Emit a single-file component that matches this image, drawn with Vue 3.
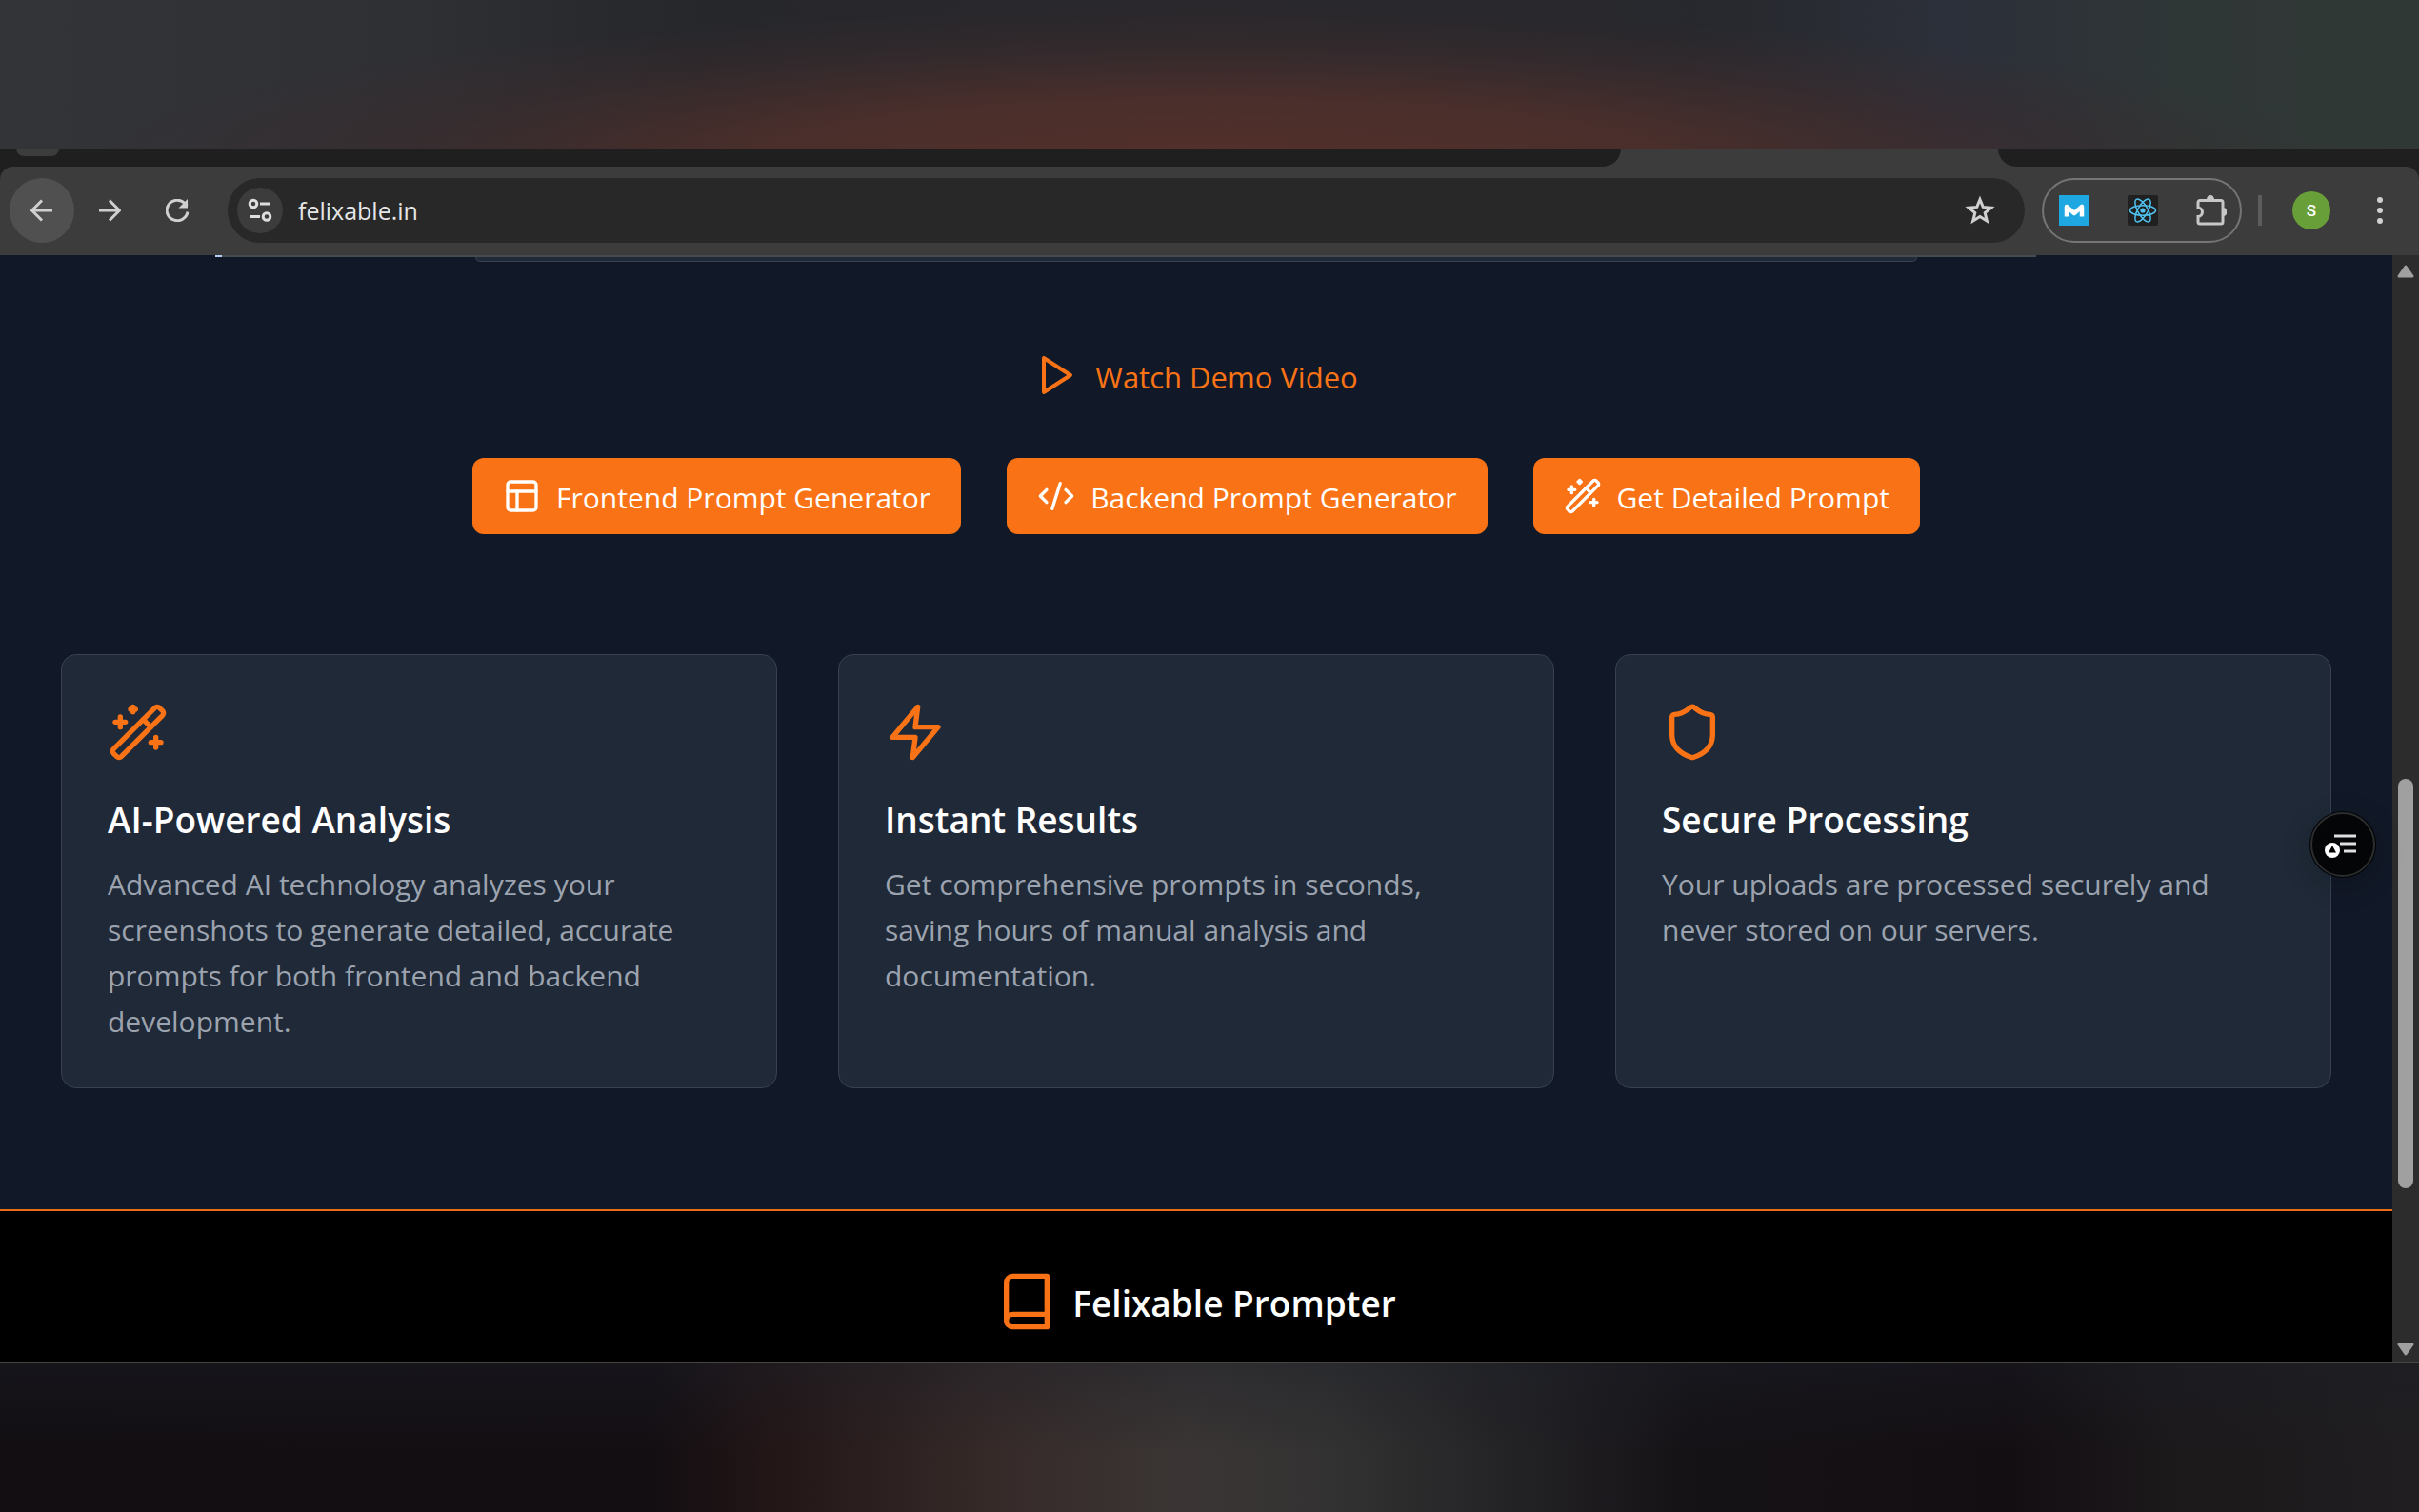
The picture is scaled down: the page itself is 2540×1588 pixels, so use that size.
<script setup>
    import { ref } from 'vue';

    const address = ref('felixable.in');

    const tools = [
        { icon: 'layout', label: 'Frontend Prompt Generator' },
        { icon: 'code', label: 'Backend Prompt Generator' },
        { icon: 'wand', label: 'Get Detailed Prompt' }
    ];

    const features = [
        {
            icon: 'wand',
            title: 'AI-Powered Analysis',
            text: 'Advanced AI technology analyzes your screenshots to generate detailed, accurate prompts for both frontend and backend development.'
        },
        {
            icon: 'zap',
            title: 'Instant Results',
            text: 'Get comprehensive prompts in seconds, saving hours of manual analysis and documentation.'
        },
        {
            icon: 'shield',
            title: 'Secure Processing',
            text: 'Your uploads are processed securely and never stored on our servers.'
        }
    ];

    // 24x24 stroke icons
    const icons = {
        layout: ['M5 3h14a2 2 0 0 1 2 2v14a2 2 0 0 1-2 2H5a2 2 0 0 1-2-2V5a2 2 0 0 1 2-2z', 'M3 9h18', 'M9 21V9'],
        code: ['m18 16 4-4-4-4', 'm6 8-4 4 4 4', 'm14.5 4-5 16'],
        wand: [
            'm21.64 3.64-1.28-1.28a1.21 1.21 0 0 0-1.72 0L2.36 18.64a1.21 1.21 0 0 0 0 1.72l1.28 1.28a1.2 1.2 0 0 0 1.72 0L21.64 5.36a1.2 1.2 0 0 0 0-1.72',
            'm14 7 3 3', 'M5 6v4', 'M19 14v4', 'M10 2v2', 'M7 8H3', 'M21 16h-4', 'M11 3H9'
        ],
        zap: ['M13 2 3 14h9l-1 8 10-12h-9l1-8z'],
        shield: ['M20 13c0 5-3.5 7.5-7.66 8.95a1 1 0 0 1-.67-.01C7.5 20.5 4 18 4 13V6a1 1 0 0 1 1-1c2 0 4.5-1.2 6.24-2.72a1.17 1.17 0 0 1 1.52 0C14.51 3.81 17 5 19 5a1 1 0 0 1 1 1z']
    };
</script>

<template>
    <div class="screen">
        <div class="backdrop backdrop--top"></div>

        <div class="browser">
            <div class="tabs">
                <div class="tabs__left"><div class="tabs__search"></div></div>
                <div class="tabs__active"></div>
                <div class="tabs__right"></div>
            </div>

            <div class="toolbar">
                <button class="toolbar__nav toolbar__nav--active" aria-label="Back">
                    <svg viewBox="0 0 24 24"><path d="M23 12H2M12 1.500 1.500 12 12 22.500" /></svg>
                </button>
                <button class="toolbar__nav" aria-label="Forward">
                    <svg viewBox="0 0 24 24"><path d="M1 12h21M12 1.500 22.500 12 12 22.500" /></svg>
                </button>
                <button class="toolbar__nav" aria-label="Reload">
                    <svg viewBox="0 0 24 24"><path d="M23 13.500A11 10.700 0 1 1 20 4.500L22.500 7" /><path d="M23 0v9.500h-9.500z" fill="currentColor" stroke="none" /></svg>
                </button>

                <div class="address">
                    <button class="address__site" aria-label="Site information">
                        <svg viewBox="0 0 26 26">
                            <circle cx="6" cy="6" r="3.800" /><path d="M13 6h11M2 19.500h11" /><circle cx="20" cy="19.500" r="3.800" />
                        </svg>
                    </button>
                    <input v-model="address" class="address__input" type="text" aria-label="Address">
                    <button class="address__star" aria-label="Bookmark">
                        <svg viewBox="0 0 32 32"><path d="m16 4.500 3.200 7.900 8.600.7-6.600 5.500 2.100 8.500L16 22.500l-7.300 4.600 2.100-8.500-6.600-5.500 8.600-.7z" /></svg>
                    </button>
                </div>

                <div class="extensions">
                    <button aria-label="M extension">
                        <svg viewBox="0 0 32 32">
                            <rect width="32" height="32" fill="#1ea7e1" />
                            <path d="M8 22.500V12l8 7 8-7v10.500" fill="none" stroke="#fff" stroke-width="4.500" stroke-linejoin="round" />
                        </svg>
                    </button>
                    <button aria-label="React developer tools">
                        <svg viewBox="0 0 32 32">
                            <rect width="32" height="32" rx="2" fill="#202020" />
                            <g fill="none" stroke="#4fc3f0" stroke-width="1.500">
                                <ellipse cx="16" cy="16" rx="13.500" ry="5.200" />
                                <ellipse cx="16" cy="16" rx="13.500" ry="5.200" transform="rotate(60 16 16)" />
                                <ellipse cx="16" cy="16" rx="13.500" ry="5.200" transform="rotate(120 16 16)" />
                            </g>
                            <circle cx="16" cy="16" r="2.600" fill="#4fc3f0" />
                        </svg>
                    </button>
                    <button aria-label="Extensions">
                        <svg viewBox="0 0 32 32">
                            <path d="M4 5.500h22a2 2 0 0 1 2 2V28a2 2 0 0 1-2 2H4a2 2 0 0 1-2-2v-5.500c6-.5 6-9 0-9.500v-5.500a2 2 0 0 1 2-2z" fill="none" stroke="#c7c7c7" stroke-width="3" />
                            <path d="M11 4.500a4 4.500 0 0 1 8 0zM28.500 13a4 4.500 0 0 1 0 9z" fill="#c7c7c7" />
                        </svg>
                    </button>
                </div>
                <div class="toolbar__divider"></div>
                <button class="avatar">S</button>
                <button class="menu" aria-label="Menu">
                    <svg viewBox="0 0 8 28"><circle cx="4" cy="3" r="3" /><circle cx="4" cy="14" r="3" /><circle cx="4" cy="25" r="3" /></svg>
                </button>
            </div>

            <div class="viewport">
                <div class="page">
                    <div class="edge"><span class="edge__mark"></span><span class="edge__line"></span></div>
                    <main class="content">
                        <div class="panel"></div>

                        <a href="#" class="demo">
                            <svg class="icon" viewBox="0 0 24 24"><path d="m5 3 14 9-14 9V3z" /></svg>
                            <span class="label">Watch Demo Video</span>
                        </a>

                        <div class="tools">
                            <button v-for="tool in tools" :key="tool.label" class="tools__button">
                                <svg class="icon" viewBox="0 0 24 24"><path v-for="d in icons[tool.icon]" :key="d" :d="d" /></svg>
                                <span class="label">{{ tool.label }}</span>
                            </button>
                        </div>

                        <div class="features">
                            <div v-for="feature in features" :key="feature.title" class="feature">
                                <svg class="icon" viewBox="0 0 24 24"><path v-for="d in icons[feature.icon]" :key="d" :d="d" /></svg>
                                <h3 class="feature__title">{{ feature.title }}</h3>
                                <p class="feature__text">{{ feature.text }}</p>
                            </div>
                        </div>
                    </main>

                    <footer class="footer">
                        <svg class="icon" viewBox="0 0 24 24"><path d="M4 19.500v-15A2.500 2.500 0 0 1 6.500 2H20v20H6.500a2.500 2.500 0 0 1 0-5H20" /></svg>
                        <span class="label">Felixable Prompter</span>
                    </footer>

                    <button class="assistant" aria-label="Reading list">
                        <svg viewBox="0 0 36 28">
                            <path d="M12 5h23M18 13h17M22 21h13" stroke="#e0e0e0" stroke-width="3" />
                            <circle cx="10" cy="20" r="8" fill="#fff" />
                            <path d="m10 15 4 7.500H6z" fill="#000" />
                        </svg>
                    </button>
                </div>

                <div class="scroll">
                    <svg viewBox="0 0 18 14"><path d="M9 2 16 12H2z" /></svg>
                    <div class="scroll__track"><div class="scroll__thumb"></div></div>
                    <svg viewBox="0 0 18 14"><path d="M9 12 2 2h14z" /></svg>
                </div>
            </div>
        </div>

        <div class="backdrop backdrop--bottom"></div>
    </div>
</template>

<style>
    body {
        margin: 0;
        background: #120e12;
    }
</style>

<style scoped>
    .screen {
        min-height: 100vh;
        display: flex;
        flex-direction: column;
        font-family: "Open Sans", "Noto Sans", sans-serif;
    }

    .screen * {
        box-sizing: border-box;
    }

    button {
        padding: 0;
        border: none;
        background: none;
        color: inherit;
        font: inherit;
        cursor: pointer;
    }

    svg {
        display: block;
        flex: none;
    }

    .icon {
        fill: none;
        stroke: currentColor;
        stroke-width: 2;
        stroke-linecap: round;
        stroke-linejoin: round;
    }

    .label {
        padding-top: 3px;
    }

    .backdrop--top {
        height: 156px;
        background:
            radial-gradient(ellipse 46% 104% at 50% 110%, #54302a 0%, #4d2f2be6 42%, #3c2b2d80 75%, transparent 100%),
            linear-gradient(90deg, #333438 0%, #303135 15%, #26272b 29%, #2a282c 50%, #27282d 70%, #2c303a 81%, #2f3636 90%, #303835 100%);
    }

    .backdrop--bottom {
        flex: 1;
        min-height: 156px;
        border-top: 2px solid #48443f;
        background:
            linear-gradient(180deg, #1b1f2866 0%, transparent 60%),
            linear-gradient(90deg, #120e12 0%, #130e12 27%, #231617 32%, #362a29 41%, #3a3534 49%, #333232 55%, #222124 63%, #151216 70%, #130e12 83%, #1c191b 90%, #201e20 100%);
    }

    .tabs {
        display: flex;
        height: 19px;
        background: #3c3c3c;
    }

    .tabs__left {
        flex: 1;
        padding-left: 17px;
        background: #1f1f1f;
        border-bottom-right-radius: 19px;
    }

    .tabs__search {
        width: 45px;
        height: 8px;
        background: #3c3c3c;
        border-radius: 0 0 12px 12px;
    }

    .tabs__active {
        width: 396px;
    }

    .tabs__right {
        width: 442px;
        background: #1f1f1f;
        border-bottom-left-radius: 19px;
    }

    .browser {
        background: #1f1f1f;
    }

    .toolbar {
        height: 93px;
        padding: 0 35px 1px 10px;
        display: flex;
        align-items: center;
        background: #3c3c3c;
        border-radius: 14px 14px 0 0;
        color: #d0d0d0;
    }

    .toolbar__nav {
        width: 68px;
        height: 68px;
        margin-right: 3px;
        display: flex;
        align-items: center;
        justify-content: center;
        border-radius: 50%;
    }

    .toolbar__nav--active {
        background: #505050;
    }

    .toolbar__nav svg {
        width: 24px;
        height: 24px;
        fill: none;
        stroke: currentColor;
        stroke-width: 3;
    }

    .address {
        flex: 1;
        height: 68px;
        margin: 0 18px 0 16px;
        padding: 0 31px 0 10px;
        display: flex;
        align-items: center;
        gap: 16px;
        background: #282828;
        border-radius: 34px;
    }

    .address__site {
        width: 48px;
        height: 48px;
        display: flex;
        align-items: center;
        justify-content: center;
        background: #3c3c3c;
        border-radius: 50%;
    }

    .address__site svg {
        width: 26px;
        height: 26px;
        fill: none;
        stroke: #dedede;
        stroke-width: 3;
    }

    .address__input {
        flex: 1;
        min-width: 0;
        padding: 0;
        border: none;
        outline: none;
        background: none;
        color: #e6e6e6;
        font-family: inherit;
        font-size: 25px;
        line-height: 40px;
    }

    .address__star svg {
        width: 32px;
        height: 32px;
        fill: none;
        stroke: currentColor;
        stroke-width: 3;
    }

    .extensions {
        height: 68px;
        padding: 0 14px 0 16px;
        display: flex;
        align-items: center;
        gap: 40px;
        border: 2px solid #757575;
        border-radius: 34px;
    }

    .extensions svg {
        width: 32px;
        height: 32px;
    }

    .toolbar__divider {
        width: 4px;
        height: 32px;
        margin: 0 32px 0 17px;
        background: #5c5c5c;
    }

    .avatar {
        width: 40px;
        height: 40px;
        background: #689f38;
        border-radius: 50%;
        color: #fff;
        font: 500 17px/40px Roboto, sans-serif;
    }

    .menu {
        margin-left: 46px;
        padding: 0 2px;
    }

    .menu svg {
        width: 8px;
        height: 28px;
        fill: currentColor;
    }

    .viewport {
        display: flex;
        background: #2c2c2c;
    }

    .page {
        position: relative;
        flex: 1;
        background: #111827;
    }

    .edge {
        display: flex;
        height: 2px;
        padding: 0 374px 0 226px;
    }

    .edge__mark {
        width: 7px;
        background: #b4cdf5;
    }

    .edge__line {
        flex: 1;
        background: #454b4f;
    }

    .content {
        padding: 0 64px 127px;
        display: flex;
        flex-direction: column;
        align-items: center;
    }

    .panel {
        width: 1514px;
        max-width: 100%;
        height: 5px;
        background: #1f2937;
        border: 1px solid #374151;
        border-top: none;
        border-radius: 0 0 12px 12px;
    }

    .demo {
        margin: 95px 0 63px;
        display: flex;
        align-items: center;
        gap: 16px;
        height: 48px;
        color: #f97316;
        font-size: 31px;
        line-height: 48px;
        text-decoration: none;
    }

    .demo .icon {
        width: 48px;
        height: 48px;
    }

    .tools {
        display: flex;
        gap: 48px;
    }

    .tools__button {
        height: 80px;
        padding: 0 32px;
        display: flex;
        align-items: center;
        gap: 16px;
        background: #f97316;
        border-radius: 12px;
        color: #fff;
        font-size: 30px;
        line-height: 48px;
    }

    .tools__button .icon {
        width: 40px;
        height: 40px;
    }

    .features {
        width: 100%;
        margin-top: 126px;
        display: grid;
        grid-template-columns: repeat(3, 1fr);
        gap: 64px;
    }

    .feature {
        padding: 49px 48px 45px;
        background: #1f2937;
        border: 1px solid #374151;
        border-radius: 16px;
    }

    .feature .icon {
        width: 64px;
        height: 64px;
        color: #f97316;
    }

    .feature__title {
        margin: 32px 0 16px;
        color: #fff;
        font-size: 37px;
        font-weight: 600;
        line-height: 56px;
    }

    .feature__text {
        margin: 0;
        color: #9ca3af;
        font-size: 30px;
        line-height: 48px;
    }

    .footer {
        padding: 63px 64px 31px;
        display: flex;
        align-items: center;
        justify-content: center;
        gap: 16px;
        background: #000;
        border-top: 2px solid #ea6c15;
        color: #fff;
        font-size: 37px;
        font-weight: 600;
        line-height: 56px;
    }

    .footer .icon {
        width: 64px;
        height: 64px;
        color: #f97316;
    }

    /* floating over the page */
    .assistant {
        position: absolute;
        top: 585px;
        right: 18px;
        width: 68px;
        height: 68px;
        padding-right: 6px;
        display: flex;
        align-items: center;
        justify-content: center;
        background: #030507;
        border: 2px solid #2b2d2f;
        border-radius: 50%;
        box-shadow: 0 0 0 1px #000, 0 8px 32px #0003;
    }

    .assistant svg {
        width: 36px;
        height: 28px;
    }

    .scroll {
        width: 28px;
        padding: 10px 5px 6px;
        display: flex;
        flex-direction: column;
    }

    .scroll svg {
        width: 18px;
        height: 14px;
        fill: #a0a0a0;
        stroke: #a0a0a0;
        stroke-width: 3;
        stroke-linejoin: round;
    }

    .scroll__track {
        flex: 1;
        display: flex;
        flex-direction: column;
        justify-content: flex-end;
        padding: 0 1px 162px;
    }

    .scroll__thumb {
        height: 45%;
        background: #a0a0a0;
        border-radius: 8px;
    }
</style>
